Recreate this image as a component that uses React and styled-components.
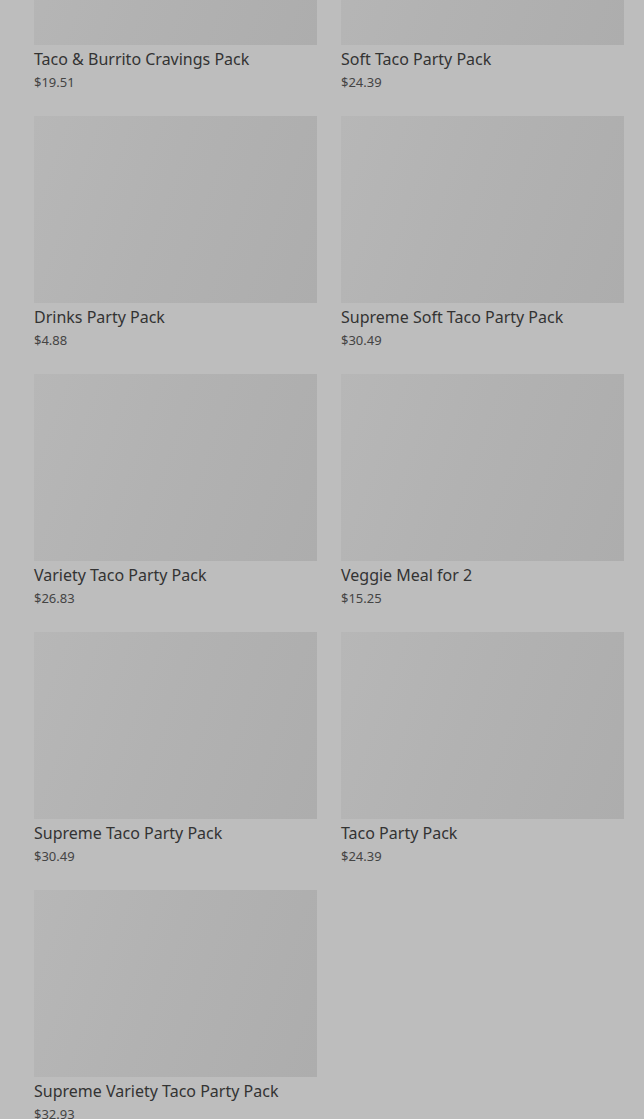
import React from 'react';
import styled, { createGlobalStyle } from 'styled-components';

const products = [
    { name: 'Taco & Burrito Cravings Pack', price: '$19.51' },
    { name: 'Soft Taco Party Pack', price: '$24.39' },
    { name: 'Drinks Party Pack', price: '$4.88' },
    { name: 'Supreme Soft Taco Party Pack', price: '$30.49' },
    { name: 'Variety Taco Party Pack', price: '$26.83' },
    { name: 'Veggie Meal for 2', price: '$15.25' },
    { name: 'Supreme Taco Party Pack', price: '$30.49' },
    { name: 'Taco Party Pack', price: '$24.39' },
    { name: 'Supreme Variety Taco Party Pack', price: '$32.93' },
];

const GlobalStyle = createGlobalStyle`
    html, body {
        margin: 0;
        padding: 0;
        background: #bdbdbd;
        font-family: 'Noto Sans', 'Liberation Sans', sans-serif;
        overflow: hidden;
    }
`;

const App = function App() {
    return (
        <>
            <GlobalStyle />
            <Page>
                <Grid>
                    {products.map((p) => (
                        <Card key={p.name}>
                            <Thumb />
                            <Title>{p.name}</Title>
                            <Price>{p.price}</Price>
                        </Card>
                    ))}
                </Grid>
            </Page>
        </>
    );
};

const Page = styled.main`
    height: 1119px;
    overflow: hidden;
    padding: 0 20px 0 34px;
`;
const Grid = styled.div`
    display: grid;
    grid-template-columns: 283px 283px;
    column-gap: 24px;
    row-gap: 25px;
    margin-top: -142px;
`;
const Card = styled.div`
    display: flex;
    flex-direction: column;
`;
const Thumb = styled.div`
    height: 187px;
    background: linear-gradient(110deg, #b7b7b7 0%, #b2b2b2 45%, #adadad 100%);
`;
const Title = styled.div`
    margin-top: 4px;
    font-size: 16px;
    line-height: 20px;
    font-weight: 400;
    color: #333333;
`;
const Price = styled.div`
    margin-top: 4px;
    font-size: 13px;
    line-height: 18px;
    color: #444444;
`;

export default App;
